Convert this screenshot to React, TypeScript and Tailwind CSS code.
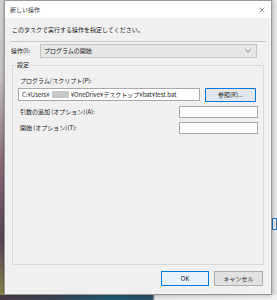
const font = { fontFamily: '"Noto Sans CJK JP", "Noto Sans", sans-serif' };

function Field({ className = "", children }: { className?: string; children?: React.ReactNode }) {
  return (
    <div className={`flex items-center border border-[#a8a8a8] bg-white px-[3px] ${className}`}>
      {children}
    </div>
  );
}

export default function App() {
  return (
    <div
      className="relative h-[300px] w-[277px] overflow-hidden bg-[linear-gradient(180deg,#d8d8d8_0%,#c9c4c8_25%,#8a6a78_55%,#5a4458_80%,#8c8a4a_100%)] text-[6px] leading-[8px] text-[#1a1a1a]"
      style={font}
    >
      {/* right edge of desktop behind the dialog */}
      <div className="absolute right-0 top-0 h-[300px] w-[6px] bg-[#e4e4e4]" />
      <div className="absolute right-0 top-[218px] h-[12px] w-[5px] border border-[#2a78c8] bg-[#dfe9f5]" />
      <div className="absolute bottom-0 left-0 h-[5px] w-[277px] bg-[linear-gradient(90deg,#4a3a48_0%,#3a4656_20%,#1f5a72_40%,#2a4f66_55%,#e8e8e8_56%,#f2f2f2_100%)]" />

      <div className="relative ml-[4px] flex h-[295px] w-[268px] flex-col border border-[#9a9a9a] bg-[#f0f0f0] shadow-[0_0_4px_rgba(0,0,0,0.35)]">
        {/* title bar */}
        <div className="flex h-[17px] shrink-0 items-center justify-between bg-white pl-[5px] pr-[5px] text-[#333]">
          <span>新しい操作</span>
          <svg width="6" height="6" viewBox="0 0 10 10" className="mr-[1px]">
            <path d="M1 1 L9 9 M9 1 L1 9" stroke="#555" strokeWidth="1" />
          </svg>
        </div>

        <div className="flex flex-1 flex-col">
          <div className="ml-[7px] mt-[8px]">このタスクで実行する操作を指定してください。</div>
          <div className="mx-[5px] mt-[7px] h-px bg-[#c8c8c8]" />

          <div className="mt-[2px] flex h-[14px] items-center pl-[6px]">
            <span className="w-[29px]">操作(I):</span>
            <div className="flex h-[14px] w-[217px] items-center justify-between border border-[#c4c4c4] bg-[#e6e6e6] pl-[3px] pr-[5px]">
              <span>プログラムの開始</span>
              <svg width="6" height="4" viewBox="0 0 8 5">
                <path d="M0.5 0.5 L4 4 L7.5 0.5" fill="none" stroke="#606060" strokeWidth="1" />
              </svg>
            </div>
          </div>

          <div className="relative mx-[7px] mt-[7px] h-[200px] border border-[#d8d8d8] pl-[5px] pr-[6px]">
            <span className="absolute -top-[5px] left-[3px] bg-[#f0f0f0] px-px">設定</span>
            <div className="ml-[2px] mt-[11px]">プログラム/スクリプト(P):</div>
            <div className="mt-[3px] flex items-start gap-[5px]">
              <Field className="h-[13px] w-[182px]">
                <span>C:¥Users¥</span>
                <span className="mx-[2px] inline-block h-[7px] w-[17px] bg-[#c8c8c8]" />
                <span>¥OneDrive¥デスクトップ¥bat¥test.bat</span>
              </Field>
              <button className="flex h-[14px] w-[51px] items-center justify-center border border-[#0078d7] bg-[#e1e6ec]">
                参照(R)...
              </button>
            </div>
            <div className="mt-[4px] flex h-[12px] items-center justify-between">
              <span className="ml-[2px]">引数の追加 (オプション)(A):</span>
              <Field className="-mr-[1px] h-[12px] w-[79px]" />
            </div>
            <div className="mt-[4px] flex h-[12px] items-center justify-between">
              <span className="ml-[2px]">開始 (オプション)(T):</span>
              <Field className="-mr-[1px] h-[12px] w-[79px]" />
            </div>
          </div>

          <div className="mr-[8px] mt-[6px] flex justify-end gap-[5px]">
            <button className="flex h-[15px] w-[48px] items-center justify-center border border-[#0078d7] bg-[#e5f1fb]">
              OK
            </button>
            <button className="flex h-[15px] w-[49px] items-center justify-center border border-[#adadad] bg-[#e1e1e1]">
              キャンセル
            </button>
          </div>
        </div>
      </div>
    </div>
  );
}
